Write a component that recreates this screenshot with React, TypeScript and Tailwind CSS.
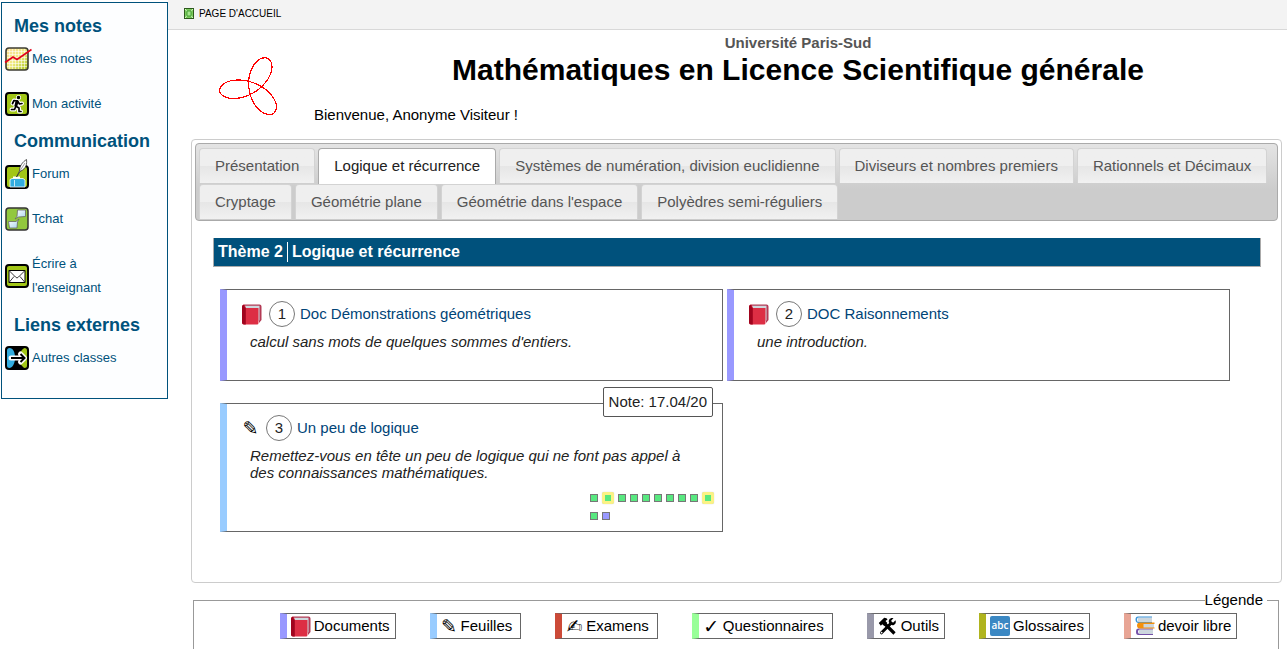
import React from 'react';

const menu = [
  {
    title: 'Mes notes',
    links: [
      { label: 'Mes notes', icon: ChartIcon },
      { label: 'Mon activité', icon: RunnerIcon },
    ],
  },
  {
    title: 'Communication',
    links: [
      { label: 'Forum', icon: QuillIcon },
      { label: 'Tchat', icon: ChatIcon },
      { label: "Écrire à l'enseignant", icon: MailIcon },
    ],
  },
  {
    title: 'Liens externes',
    links: [{ label: 'Autres classes', icon: SwapIcon }],
  },
];

const tabs = [
  'Présentation',
  'Logique et récurrence',
  'Systèmes de numération, division euclidienne',
  'Diviseurs et nombres premiers',
  'Rationnels et Décimaux',
  'Cryptage',
  'Géométrie plane',
  "Géométrie dans l'espace",
  'Polyèdres semi-réguliers',
];

const legend = [
  { label: 'Documents', color: 'border-l-[#9999ff]', icon: <BookIcon />, wide: true },
  { label: 'Feuilles', color: 'border-l-[#99ccff]', icon: <Glyph char="✎" />, wide: false },
  { label: 'Examens', color: 'border-l-[#cc4a38]', icon: <Glyph char="✍" />, wide: false },
  { label: 'Questionnaires', color: 'border-l-[#99ff99]', icon: <Glyph char="✓" />, wide: false },
  { label: 'Outils', color: 'border-l-[#9999aa]', icon: <ToolsIcon />, wide: true },
  { label: 'Glossaires', color: 'border-l-[#b0b41e]', icon: <AbcIcon />, wide: true },
  { label: 'devoir libre', color: 'border-l-[#e8a595]', icon: <BooksIcon />, wide: true },
];

const steps = ['done', 'best', 'done', 'done', 'done', 'done', 'done', 'done', 'done', 'best', 'done', 'todo'];

function Glyph({ char }: { char: string }) {
  return (
    <span className="flex w-[17px] justify-center font-['DejaVu_Sans',sans-serif] text-[19px] leading-5 text-black">
      {char}
    </span>
  );
}

function ChartIcon() {
  return (
    <svg width="28" height="24" viewBox="0 0 28 24" className="-mr-1 shrink-0 overflow-visible">
      <defs>
        <linearGradient id="chart" x1="0" y1="0" x2="1" y2="1">
          <stop offset="0" stopColor="#ffdf98" />
          <stop offset="0.5" stopColor="#f0ea80" />
          <stop offset="1" stopColor="#a9c41c" />
        </linearGradient>
      </defs>
      <rect x="1" y="1" width="22" height="22" rx="3" fill="url(#chart)" stroke="#3c3c34" strokeWidth="1.6" />
      <path d="M4.500 2v20M7.500 2v20M10.500 2v20M13.500 2v20M16.500 2v20M19.500 2v20M2 4.500h20M2 7.500h20M2 10.500h20M2 13.500h20M2 16.500h20M2 19.500h20" stroke="#fff" strokeOpacity="0.55" />
      <path d="M0 15.500 8 10l4 2.500L26.500 2.500" fill="none" stroke="#e2001a" strokeWidth="1.6" />
    </svg>
  );
}

function RunnerIcon() {
  return (
    <svg width="24" height="24" viewBox="0 0 24 24" className="shrink-0">
      <rect x="1" y="1" width="22" height="22" rx="3" fill="#a2c617" stroke="#000" strokeWidth="2" />
      <g fill="none" stroke="#fff" strokeWidth="4" strokeLinecap="round" strokeLinejoin="round">
        <path d="M12 9l-1.500 5 3.500 2v3.500h2M11 14l-1.500 3.500H6.500M7.500 11.500l1.500-3 3.500.5 2 3 2.500-.5" />
        <circle cx="13.500" cy="5.500" r="0.500" />
      </g>
      <g fill="none" stroke="#000" strokeWidth="1.700" strokeLinecap="round" strokeLinejoin="round">
        <path d="M12 9l-1.500 5 3.500 2v3.500h2M11 14l-1.500 3.500H6.500M7.500 11.500l1.500-3 3.500.5 2 3 2.500-.5" />
        <path d="M12 9.500l-1 4" strokeWidth="3" />
        <circle cx="13.500" cy="5.500" r="0.900" />
      </g>
    </svg>
  );
}

function QuillIcon() {
  return (
    <svg width="24" height="30" viewBox="0 0 24 30" className="shrink-0">
      <rect x="1" y="7" width="22" height="22" rx="3" fill="#a2c617" stroke="#000" strokeWidth="2" />
      <path d="M5 20.500l2-1h11l2 1.500v7H5z" fill="#33ade0" stroke="#fff" strokeWidth="0.800" />
      <path d="M9.500 21v6.500" stroke="#c4e9f8" />
      <path d="M8 18.500h7" stroke="#fff" strokeWidth="2" />
      <path d="M11.500 18l3-6c0-5 3-9 7-11.500.5 4 .2 9-6.500 12z" fill="#fff" stroke="#333" strokeWidth="0.800" />
      <path d="M14.500 12.500 20 4" stroke="#777" strokeWidth="0.700" />
    </svg>
  );
}

function ChatIcon() {
  return (
    <svg width="24" height="24" viewBox="0 0 24 24" className="shrink-0">
      <defs>
        <linearGradient id="bubble" x1="0" y1="0" x2="1" y2="1">
          <stop offset="0" stopColor="#fff" />
          <stop offset="1" stopColor="#a8d4ee" />
        </linearGradient>
      </defs>
      <rect x="1" y="1" width="22" height="22" rx="3" fill="#92c83e" stroke="#333" strokeWidth="1.500" />
      <path d="M12.500 3h8v6.500l-7 .5-3.500 2 2-2.500z" fill="url(#bubble)" stroke="#666" strokeWidth="0.800" strokeLinejoin="round" />
      <path d="M3.500 14.500h7.500l3-2.500-1.500 3-.5 6H4.500z" fill="url(#bubble)" stroke="#666" strokeWidth="0.800" strokeLinejoin="round" />
    </svg>
  );
}

function MailIcon() {
  return (
    <svg width="24" height="24" viewBox="0 0 24 24" className="shrink-0">
      <rect x="1" y="1" width="22" height="22" rx="3" fill="#a2c617" stroke="#000" strokeWidth="2" />
      <path d="M4 6.500h16v12H4z" fill="#fff" stroke="#000" />
      <path d="m4 6.500 6.500 6.500 1.500 1 1.500-1L20 6.500M4 18.500l5-6M20 18.500l-5-6" fill="none" stroke="#222" strokeWidth="0.900" />
    </svg>
  );
}

function SwapIcon() {
  return (
    <svg width="24" height="24" viewBox="0 0 24 24" className="shrink-0">
      <rect width="24" height="24" rx="4" />
      <path d="M2 4.500Q2 2 4.500 2C8 2 10 6 10 12s-3 10-5.500 10Q2 22 2 19.500z" fill="#33ade0" />
      <path d="M22 4.500Q22 2 19.500 2C16 4 14 8 14 12s3 9 5.500 10q2.500 0 2.500-2.500z" fill="#a2c617" />
      <path d="M6 12h13M15.500 8l4 4-4 4" fill="none" stroke="#fff" strokeWidth="5" strokeLinecap="round" strokeLinejoin="round" />
      <path d="M6 12h13M15.500 8l4 4-4 4" fill="none" stroke="#000" strokeWidth="2" />
    </svg>
  );
}

function BookIcon() {
  return (
    <svg width="20" height="21" viewBox="0 0 20 21" className="shrink-0">
      <path d="M3 0.500h14.500q2 0 2 2v13.500L17 19V4H2z" fill="#b33a55" />
      <path d="M3 1.800h14.500v14.500l-1.500 1V5H2.500z" fill="#cfd8dd" />
      <path d="M0 3Q0 .5 2.500.5L4 4h12.500v15q0 1.500-1.500 1.500H2q-2 0-2-2z" fill="#dd2e44" />
      <path d="M0 3Q0 .5 2.500.5 2 3.500 3.800 4v16.500H2q-2 0-2-2z" fill="#a0041e" />
    </svg>
  );
}

function ToolsIcon() {
  return (
    <svg width="19" height="19" viewBox="0 0 19 19" className="shrink-0">
      <path d="M3.500 15.800 13 6.300" stroke="#000" strokeWidth="3" strokeLinecap="round" />
      <path d="M17.500 3.200 15 5.700l-2-1.800L15.500 1C12 .3 10 3 11 5.500l2.500 2.600c3 .8 5.200-2 4-4.900z" />
      <path d="M7 7l9.500 9.500" stroke="#000" strokeWidth="3.200" />
      <path d="M.8 6 6.200.8C8 .8 9 1.500 9.500 2.500L7.500 4l1.800 2-3 3-2-1.800-1.500 1.500z" />
      <circle cx="3.600" cy="15.600" r="0.900" fill="#fff" />
    </svg>
  );
}

function AbcIcon() {
  return (
    <svg width="20" height="20" viewBox="0 0 20 20" className="shrink-0">
      <rect width="20" height="20" rx="2" fill="#3b88c3" />
      <text x="10" y="13" textAnchor="middle" fill="#fff" fontSize="10" fontWeight="600" fontFamily="Open Sans, sans-serif">abc</text>
    </svg>
  );
}

function BooksIcon() {
  return (
    <svg width="20" height="20" viewBox="0 0 20 20" className="shrink-0">
      <path d="M3 1.500h14v5H3z" fill="#ccd6dd" />
      <path d="M17 .5H3Q.5.500.5 3.500T3 7h14V6H3.500Q2 6 2 3.800t1.500-2.300H17z" fill="#3b94d9" />
      <path d="M4 13.500h14v4.500H4z" fill="#ccd6dd" />
      <path d="M18 12.500H3.500Q1 12.500 1 15.800T3.500 19H18v-1H4.500q-1.500-.3-1.500-2.200T4.500 13.500H18z" fill="#7450a8" />
      <path d="M7 8h12v4H7z" fill="#ccd6dd" />
      <path d="M19.500 6.500H5Q2 6.500 2 9.500t3 3h14.500v-1H8.500V8h11z" fill="#f4900c" />
    </svg>
  );
}

function HomeIcon() {
  return (
    <svg width="10" height="11" viewBox="0 0 10 11">
      <rect x="0.500" y="0.500" width="9" height="10" fill="#7bcb5c" stroke="#2c5a1c" />
      <path d="M1 1l8 9M9 1l-8 9" stroke="#e6ffd8" strokeWidth="0.900" />
      <rect x="3" y="3" width="4" height="5" fill="#a5e58c" stroke="#38952a" strokeWidth="0.800" />
    </svg>
  );
}

// hypotrochoid with three loops
function Logo() {
  const turn = (174 * Math.PI) / 180;
  const points = Array.from({ length: 121 }, (_, i) => {
    const t = (i / 120) * 2 * Math.PI;
    const x = 14.7 * Math.cos(t + turn) + 19.3 * Math.cos(turn - 2 * t);
    const y = 14.7 * Math.sin(t + turn) + 19.3 * Math.sin(turn - 2 * t);
    return `${(35.5 + x).toFixed(1)},${(30.5 + y * 0.94).toFixed(1)}`;
  });
  return (
    <svg width="62" height="62" viewBox="0 0 62 62" aria-label="Logo">
      <polyline points={points.join(' ')} fill="none" stroke="#f00" strokeWidth="1.200" shapeRendering="crispEdges" />
    </svg>
  );
}

function Card({ num, title, text, color, icon, children }: {
  num: number; title: string; text: string; color: string; icon: React.ReactNode; children?: React.ReactNode;
}) {
  return (
    <article className={`relative border border-l-[7px] border-[#666] bg-white pt-[11px] pr-2 pb-[10px] pl-[15px] ${color}`}>
      <h3 className="flex items-center gap-[5px]">
        {icon}
        <span className="ml-[2px] flex size-[26px] items-center justify-center rounded-full border border-[#777]">{num}</span>
        <a href="#" className="text-[#004477]">{title}</a>
      </h3>
      <p className="mt-[6px] pr-6 pl-2 leading-[17px] italic">{text}</p>
      {children}
    </article>
  );
}

export default function App() {
  return (
    <div className="flex min-h-screen items-start bg-white font-['Liberation_Sans',Arial,sans-serif] text-[15px] text-[#222]">
      {/* Side menu */}
      <nav className="mt-[2px] ml-px w-[167px] shrink-0 border border-[#00527c] bg-[#fdfeff] pt-[9px] pb-[17px] text-[#00527c]">
        {menu.map((group) => (
          <section key={group.title}>
            <h2 className="pt-[3px] pl-3 text-lg leading-[22px] font-bold">{group.title}</h2>
            <ul>
              {group.links.map(({ label, icon: Icon }) => (
                <li key={label}>
                  <a href="#" className="flex items-center gap-[3px] pt-[10px] pr-8 pb-[11px] pl-[3px] text-[13px] leading-6">
                    <span className="flex h-6 items-center">
                      <Icon />
                    </span>
                    {label}
                  </a>
                </li>
              ))}
            </ul>
          </section>
        ))}
      </nav>

      <div className="flex min-h-screen min-w-0 flex-1 flex-col">
        <div className="border-b border-[#d8d8d8] bg-[#f3f3f3] pt-[7px] pb-[9px] pl-4 text-[10px] leading-[13px]">
          <a href="#" className="flex items-center gap-[5px] text-black">
            <HomeIcon />
            PAGE D'ACCUEIL
          </a>
        </div>

        <main className="flex flex-1 flex-col pr-[5px] pl-[23px]">
          <header className="flex pb-[15px]">
            <div className="w-[123px] shrink-0 pt-[27px] pl-[27px]">
              <Logo />
            </div>
            <div className="flex-1 pt-1">
              <p className="text-center leading-[18px] font-bold text-[#555]">Université Paris-Sud</p>
              <h1 className="text-center text-3xl leading-9 font-bold text-black">
                Mathématiques en Licence Scientifique générale
              </h1>
              <p className="mt-[18px] leading-[18px] text-black">Bienvenue, Anonyme Visiteur !</p>
            </div>
          </header>

          <div className="flex-none rounded border border-[#ccc] p-[3px]">
            <div role="tablist" className="flex flex-wrap gap-x-[3px] gap-y-px rounded border border-[#aaa] bg-[#ccc] bg-linear-to-b from-[#e4e4e4] to-[#ccc] to-60% px-[3px] pt-1 pb-px">
              {tabs.map((tab, i) => (
                <button
                  key={tab}
                  role="tab"
                  aria-selected={i === 1}
                  className={
                    i === 1
                      ? 'relative -mb-px h-9 rounded-t border border-b-0 border-[#aaa] bg-white px-[15px] text-[#212121]'
                      : 'h-[35px] rounded-t border border-b-0 border-[#d3d3d3] bg-linear-to-b from-[#efefef] from-50% via-[#e6e6e6] via-50% to-[#f1f1f1] px-[15px] text-[#555]'
                  }
                >
                  {tab}
                </button>
              ))}
            </div>

            <section className="pt-[17px] pr-[17px] pb-[47px] pl-[18px]">
              <h2 className="flex items-center border border-t-0 border-[#aaa] bg-[#00517c] px-1 py-1 text-base leading-5 font-bold text-white">
                <span className="border-r border-white pr-1">Thème 2</span>
                <span className="pl-1">Logique et récurrence</span>
              </h2>

              <div className="mt-[22px] mr-[31px] ml-[7px] grid grid-cols-2 gap-x-1 gap-y-[22px]">
                <Card num={1} title="Doc Démonstrations géométriques" text="calcul sans mots de quelques sommes d'entiers." color="border-l-[#9999ff]" icon={<BookIcon />}>
                  <div className="h-5" />
                </Card>
                <Card num={2} title="DOC Raisonnements" text="une introduction." color="border-l-[#9999ff]" icon={<BookIcon />} />
                <Card num={3} title="Un peu de logique" text="Remettez-vous en tête un peu de logique qui ne font pas appel à des connaissances mathématiques." color="border-l-[#99ccff]" icon={<Glyph char="✎" />}>
                  <div className="absolute -top-[17px] right-[9px] rounded-xs border border-[#555] bg-white px-[5px] py-[5px] leading-[18px]">
                    Note: 17.04/20
                  </div>
                  <div className="mt-[11px] mb-px ml-auto flex w-[124px] flex-wrap items-center gap-x-1 gap-y-2">
                    {steps.map((step, i) => (
                      <a
                        key={i}
                        href="#"
                        aria-label={`Exercice ${i + 1}`}
                        className={
                          step === 'best'
                            ? 'size-3 rounded-xs border-[3px] border-[#fbf284] bg-[#58e880] shadow-[0_0_1px_#bbb]'
                            : step === 'todo'
                              ? 'size-2 border border-[#777] bg-[#9999ff]'
                              : 'size-2 border border-[#777] bg-[#58e880]'
                        }
                      />
                    ))}
                  </div>
                </Card>
              </div>
            </section>
          </div>

          <fieldset className="mt-2 mr-[3px] ml-[2px] flex-1 border border-b-0 border-[#999] pr-[11px] pl-14">
            <legend className="ml-auto pr-1 leading-[18px] text-black">Légende</legend>
            <ul className="flex flex-wrap justify-center gap-x-[34px] gap-y-2 pt-1 text-black">
              {legend.map((item) => (
                <li
                  key={item.label}
                  className={`flex h-[26px] items-center gap-[3px] border border-l-[7px] border-[#666] bg-white pl-1 ${item.wide ? 'pr-[5px]' : 'pr-2'} ${item.color}`}
                >
                  <span className={`flex justify-center ${item.wide ? 'w-5' : 'w-[17px]'}`}>{item.icon}</span>
                  {item.label}
                </li>
              ))}
            </ul>
          </fieldset>
        </main>
      </div>
    </div>
  );
}
